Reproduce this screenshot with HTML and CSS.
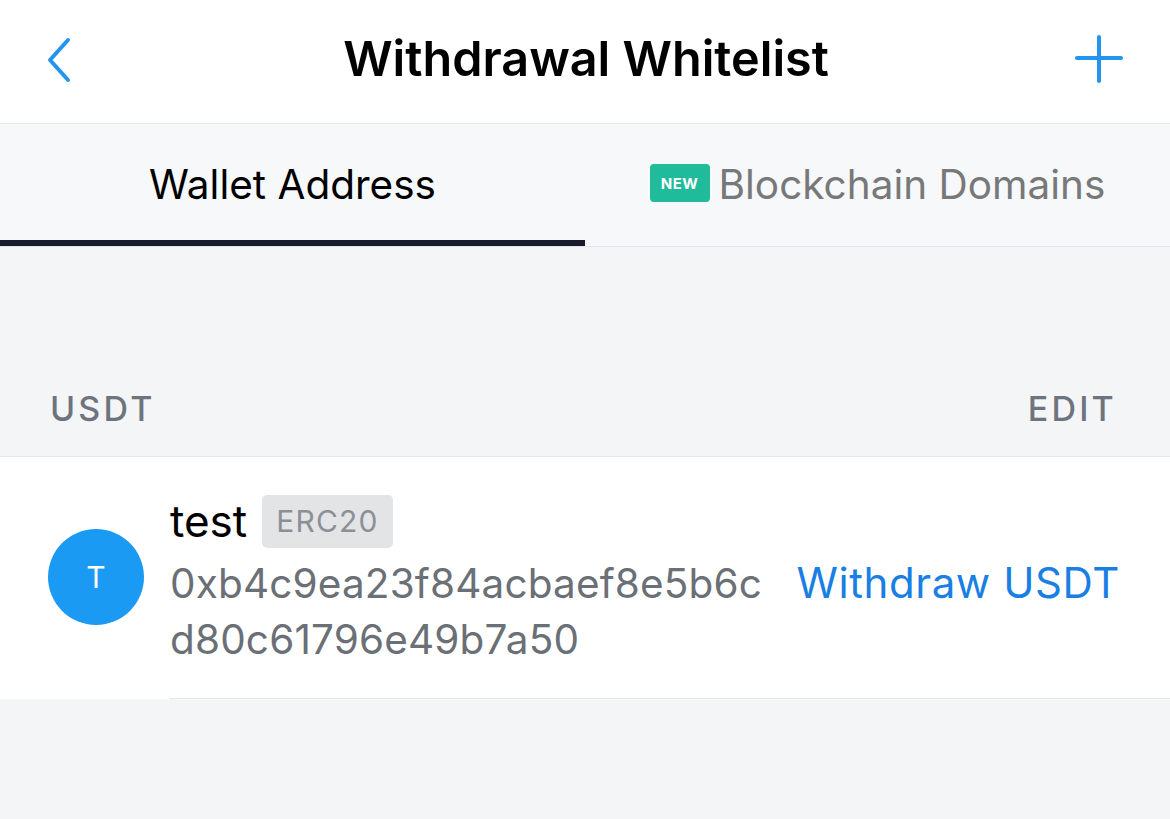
FILE: index.html
```html
<!DOCTYPE html>
<html>
<head>
<meta charset="utf-8">
<link rel="stylesheet" href="styles.css">
</head>
<body>
<div class="app">
  <header class="nav">
    <div class="nav-btn back">
      <svg width="30" height="46" viewBox="0 0 30 46"><path d="M22 3 L4 23 L22 43" fill="none" stroke="#2296ee" stroke-width="4" stroke-linecap="round" stroke-linejoin="round"/></svg>
    </div>
    <h1 class="title">Withdrawal Whitelist</h1>
    <div class="nav-btn add">
      <svg width="50" height="50" viewBox="0 0 50 50"><path d="M25 3 V47 M3 24 H47" fill="none" stroke="#2296ee" stroke-width="4" stroke-linecap="round"/></svg>
    </div>
  </header>
  <nav class="tabs">
    <div class="tab active"><span>Wallet Address</span></div>
    <div class="tab"><span class="new">NEW</span><span class="tab-label">Blockchain Domains</span></div>
  </nav>
  <section class="section-head">
    <span>USDT</span>
    <span>EDIT</span>
  </section>
  <div class="row">
    <div class="avatar">T</div>
    <div class="row-body">
      <div class="info">
        <div class="name-line"><span class="name">test</span><span class="chain">ERC20</span></div>
        <div class="addr">0xb4c9ea23f84acbaef8e5b6c<br>d80c61796e49b7a50</div>
      </div>
      <div class="action">Withdraw USDT</div>
    </div>
  </div>
</div>
</body>
</html>
```
FILE: styles.css
```css
* { box-sizing: border-box; }
html, body { margin: 0; padding: 0; }
body {
  width: 1170px;
  height: 819px;
  overflow: hidden;
  background: #f4f5f7;
  font-family: Inter, "Liberation Sans", sans-serif;
}
.app { display: flex; flex-direction: column; }
.nav {
  height: 124px;
  background: #ffffff;
  border-bottom: 1px solid #e6e7ea;
  display: flex;
  align-items: center;
  justify-content: space-between;
  padding: 0 46px 0 46px;
}
.nav-btn { display: flex; align-items: center; width: 60px; height: 60px; }
.back { justify-content: flex-start; padding-bottom: 4px; }
.add { justify-content: flex-end; padding-bottom: 6px; }
.title {
  margin: 0;
  font-size: 48.5px;
  font-weight: 600;
  color: #000;
  letter-spacing: 0;
  padding-bottom: 6px;
  padding-left: 2px;
}
.tabs {
  height: 123px;
  background: #f7f8fa;
  border-bottom: 1px solid #e4e5e8;
  display: flex;
}
.tab {
  flex: 1 1 0;
  display: flex;
  align-items: center;
  justify-content: center;
  font-size: 40.5px;
  color: #000;
  border-bottom: 6px solid transparent;
  padding-top: 4px;
}
.tab.active { border-bottom-color: #171b2b; }
.tab-label { color: #777879; }
.new {
  background: #1fbb9b;
  color: #fff;
  font-size: 15px;
  font-weight: 700;
  letter-spacing: 0.5px;
  width: 60px;
  height: 38px;
  border-radius: 4px;
  display: inline-flex;
  align-items: center;
  justify-content: center;
  margin-right: 9px;
  margin-top: -2px;
}
.section-head {
  height: 210px;
  display: flex;
  justify-content: space-between;
  align-items: flex-end;
  padding: 0 53px 27px 50px;
  border-bottom: 1px solid #e6e7ea;
  font-size: 34px;
  font-weight: 500;
  letter-spacing: 3.2px;
  color: #6e747d;
}
.row {
  background: #fff;
  display: flex;
  align-items: center;
  padding-left: 48px;
}
.avatar {
  width: 96px;
  height: 96px;
  border-radius: 50%;
  background: #1b9af4;
  color: #fff;
  font-size: 30px;
  display: flex;
  align-items: center;
  justify-content: center;
  flex: none;
  margin-right: 26px;
  margin-bottom: 2px;
}
.row-body {
  flex: 1;
  display: flex;
  align-items: center;
  justify-content: space-between;
  border-bottom: 1px solid #e4e5e8;
  padding: 37px 50px 30px 0;
}
.name-line { display: flex; align-items: center; }
.name { font-size: 44px; color: #000; }
.chain {
  margin-left: 15px;
  background: #e3e4e6;
  color: #8b9097;
  font-size: 30px;
  border-radius: 5px;
  height: 53px;
  padding: 0 14px;
  display: inline-flex;
  align-items: center;
  letter-spacing: 1.2px;
}
.addr {
  margin-top: 8px;
  font-size: 40.5px;
  line-height: 56px;
  color: #6b6f76;
  letter-spacing: 0.15px;
}
.action {
  font-size: 42px;
  color: #1a7fe3;
  margin-top: 2px;
  letter-spacing: 0.6px;
}
```
